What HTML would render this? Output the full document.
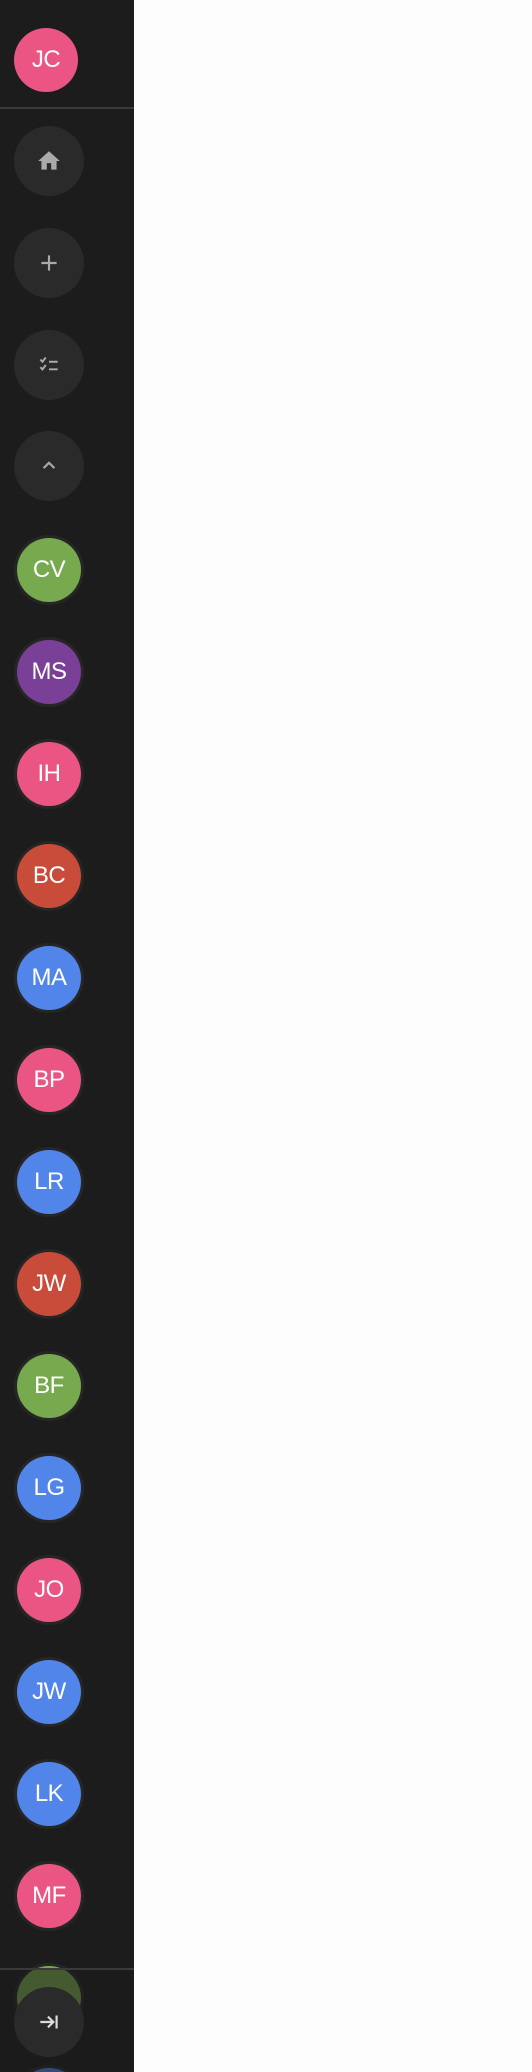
<!DOCTYPE html><html><head><style>
body{margin:0;width:532px;height:2072px;background:#fdfdfd;overflow:hidden;font-family:"Liberation Sans",sans-serif}
#sb{position:absolute;left:0;top:0;width:134px;height:2072px;background:#1c1c1c;overflow:hidden}
.c{position:absolute;border-radius:50%;display:flex;align-items:center;justify-content:center}
.b{left:14px;width:70px;height:70px;background:#2a2a2a}
.a{left:14px;width:70px;height:70px;background:#262626}
.a span{width:64px;height:64px;border-radius:50%;display:flex;align-items:center;justify-content:center;color:#fff;font-size:24px;letter-spacing:-0.5px}
.hr{position:absolute;left:0;width:134px;height:2px;background:#3a3a3a}
</style></head><body><div id="sb">
<div class="c" style="left:14px;top:28px;width:64px;height:64px;background:#ea5584;color:#fff;font-size:24px;letter-spacing:-0.5px">JC</div>
<div class="hr" style="top:107px"></div>
<div class="c b" style="top:126px"><svg width="26" height="26" viewBox="0 0 24 24"><path d="M10 20v-6h4v6h5v-8h3L12 3 2 12h3v8z" fill="#aaa"/></svg></div>
<div class="c b" style="top:228px"><svg width="26" height="26" viewBox="0 0 24 24"><path d="M12 5v14M5 12h14" stroke="#aaa" stroke-width="2"/></svg></div>
<div class="c b" style="top:330px"><svg width="26" height="26" viewBox="0 0 24 24"><path d="M4 7l2 2 3-4M4 14l2 2 3-4M12 9h8M12 16h8" stroke="#aaa" stroke-width="1.8" fill="none"/></svg></div>
<div class="c b" style="top:431px"><svg width="26" height="26" viewBox="0 0 24 24"><path d="M7 14l5-5 5 5" stroke="#aaa" stroke-width="2" fill="none"/></svg></div>
<div id="list"></div>
<div style="position:absolute;left:0;top:1968px;width:134px;height:104px;background:rgba(28,28,28,0.55)"></div>
<div class="hr" style="top:1968px"></div>
<div class="c b" style="top:1987px"><svg width="26" height="26" viewBox="0 0 24 24"><path d="M4 12h12M11 7l5 5-5 5M19 6v12" stroke="#ddd" stroke-width="2" fill="none"/></svg></div>
</div>
<script>
var d=[["CV","#77a94e"],["MS","#7a3f96"],["IH","#ea5584"],["BC","#c94b3a"],["MA","#5285ea"],["BP","#ea5584"],["LR","#5285ea"],["JW","#c94b3a"],["BF","#77a94e"],["LG","#5285ea"],["JO","#ea5584"],["JW","#5285ea"],["LK","#5285ea"],["MF","#ea5584"],["","#77a94e"],["","#5285ea"]];
var h="";d.forEach(function(x,i){var t=Math.round(569.5+102*i-35);h+='<div class="c a" style="top:'+t+'px"><span style="background:'+x[1]+'">'+x[0]+'</span></div>'});
document.getElementById("list").outerHTML=h;
</script></body></html>
